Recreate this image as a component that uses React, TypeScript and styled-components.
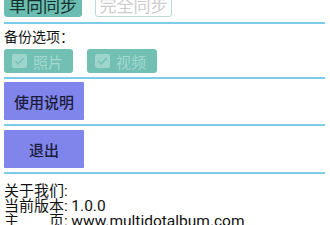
import React from 'react';
import styled, { createGlobalStyle } from 'styled-components';

const GlobalStyle = createGlobalStyle`
  html, body {
    margin: 0;
    padding: 0;
    background: #ffffff;
    overflow: hidden;
  }
  body {
    font-family: "Roboto", "Noto Sans CJK SC", sans-serif;
  }
`;

const Page = styled.div`
  width: 321px;
  margin: -7px 0 0 4px;
  display: flex;
  flex-direction: column;
`;

const Row = styled.div<{ $gap: number; $top?: number }>`
  display: flex;
  align-items: flex-start;
  gap: ${(p) => p.$gap}px;
  margin-top: ${(p) => p.$top ?? 0}px;
`;

const SyncButton = styled.button<{ $active?: boolean }>`
  box-sizing: border-box;
  height: 24px;
  width: ${(p) => (p.$active ? 78 : 77)}px;
  padding: 2px 0 0;
  border-radius: 3px;
  font-family: inherit;
  font-size: 17px;
  line-height: 17px;
  border: 1px solid ${(p) => (p.$active ? '#6cbdb1' : '#b9dad5')};
  background: ${(p) => (p.$active ? '#6cbdb1' : '#ffffff')};
  color: ${(p) => (p.$active ? '#132f2b' : '#cccccc')};
`;

const Divider = styled.div<{ $top: number }>`
  height: 2px;
  background: #7ccbe8;
  margin-top: ${(p) => p.$top}px;
`;

const Label = styled.div`
  font-size: 14px;
  line-height: 20px;
  color: #161616;
  margin-top: 3px;
`;

const CheckOption = styled.div<{ $width: number }>`
  box-sizing: border-box;
  width: ${(p) => p.$width}px;
  height: 24px;
  border-radius: 3px;
  background: #72c0b4;
  display: flex;
  align-items: center;
  padding-left: 8px;
  gap: 6px;
  font-size: 15px;
  color: #a4d8d0;
`;

const ActionButton = styled.button`
  box-sizing: border-box;
  width: 80px;
  height: 38px;
  border: none;
  padding: 0;
  border-radius: 1px;
  background: #8085ec;
  color: #1b1c3a;
  font-family: inherit;
  font-size: 15px;
  font-weight: 500;
`;

const Info = styled.div`
  margin-top: 10px;
  font-size: 15px;
  line-height: 15px;
  color: #111111;
`;

const InfoLine = styled.div`
  white-space: pre;
  height: 15px;
`;

const Latin = styled.span`
  font-size: 15.5px;
`;

const CheckIcon = () => (
  <svg width="15" height="14" viewBox="0 0 15 14">
    <rect x="0" y="0" width="15" height="14" rx="2" fill="#9dd5cc" />
    <path d="M3.5 7.2 L6.2 9.8 L11.6 4.2" fill="none" stroke="#78c3b8" strokeWidth="1.8" />
  </svg>
);

export default function App() {
  return (
    <>
      <GlobalStyle />
      <Page>
        <Row $gap={13}>
          <SyncButton $active>单向同步</SyncButton>
          <SyncButton>完全同步</SyncButton>
        </Row>
        <Divider $top={5} />
        <Label>备份选项：</Label>
        <Row $gap={14} $top={2}>
          <CheckOption $width={69}>
            <CheckIcon />
            照片
          </CheckOption>
          <CheckOption $width={70}>
            <CheckIcon />
            视频
          </CheckOption>
        </Row>
        <Divider $top={4} />
        <Row $gap={0} $top={3}>
          <ActionButton>使用说明</ActionButton>
        </Row>
        <Divider $top={4} />
        <Row $gap={0} $top={4}>
          <ActionButton>退出</ActionButton>
        </Row>
        <Divider $top={4} />
        <Info>
          <InfoLine>关于我们:</InfoLine>
          <InfoLine>当前版本: <Latin>1.0.0</Latin></InfoLine>
          <InfoLine>主　　页: <Latin>www.multidotalbum.com</Latin></InfoLine>
        </Info>
      </Page>
    </>
  );
}
